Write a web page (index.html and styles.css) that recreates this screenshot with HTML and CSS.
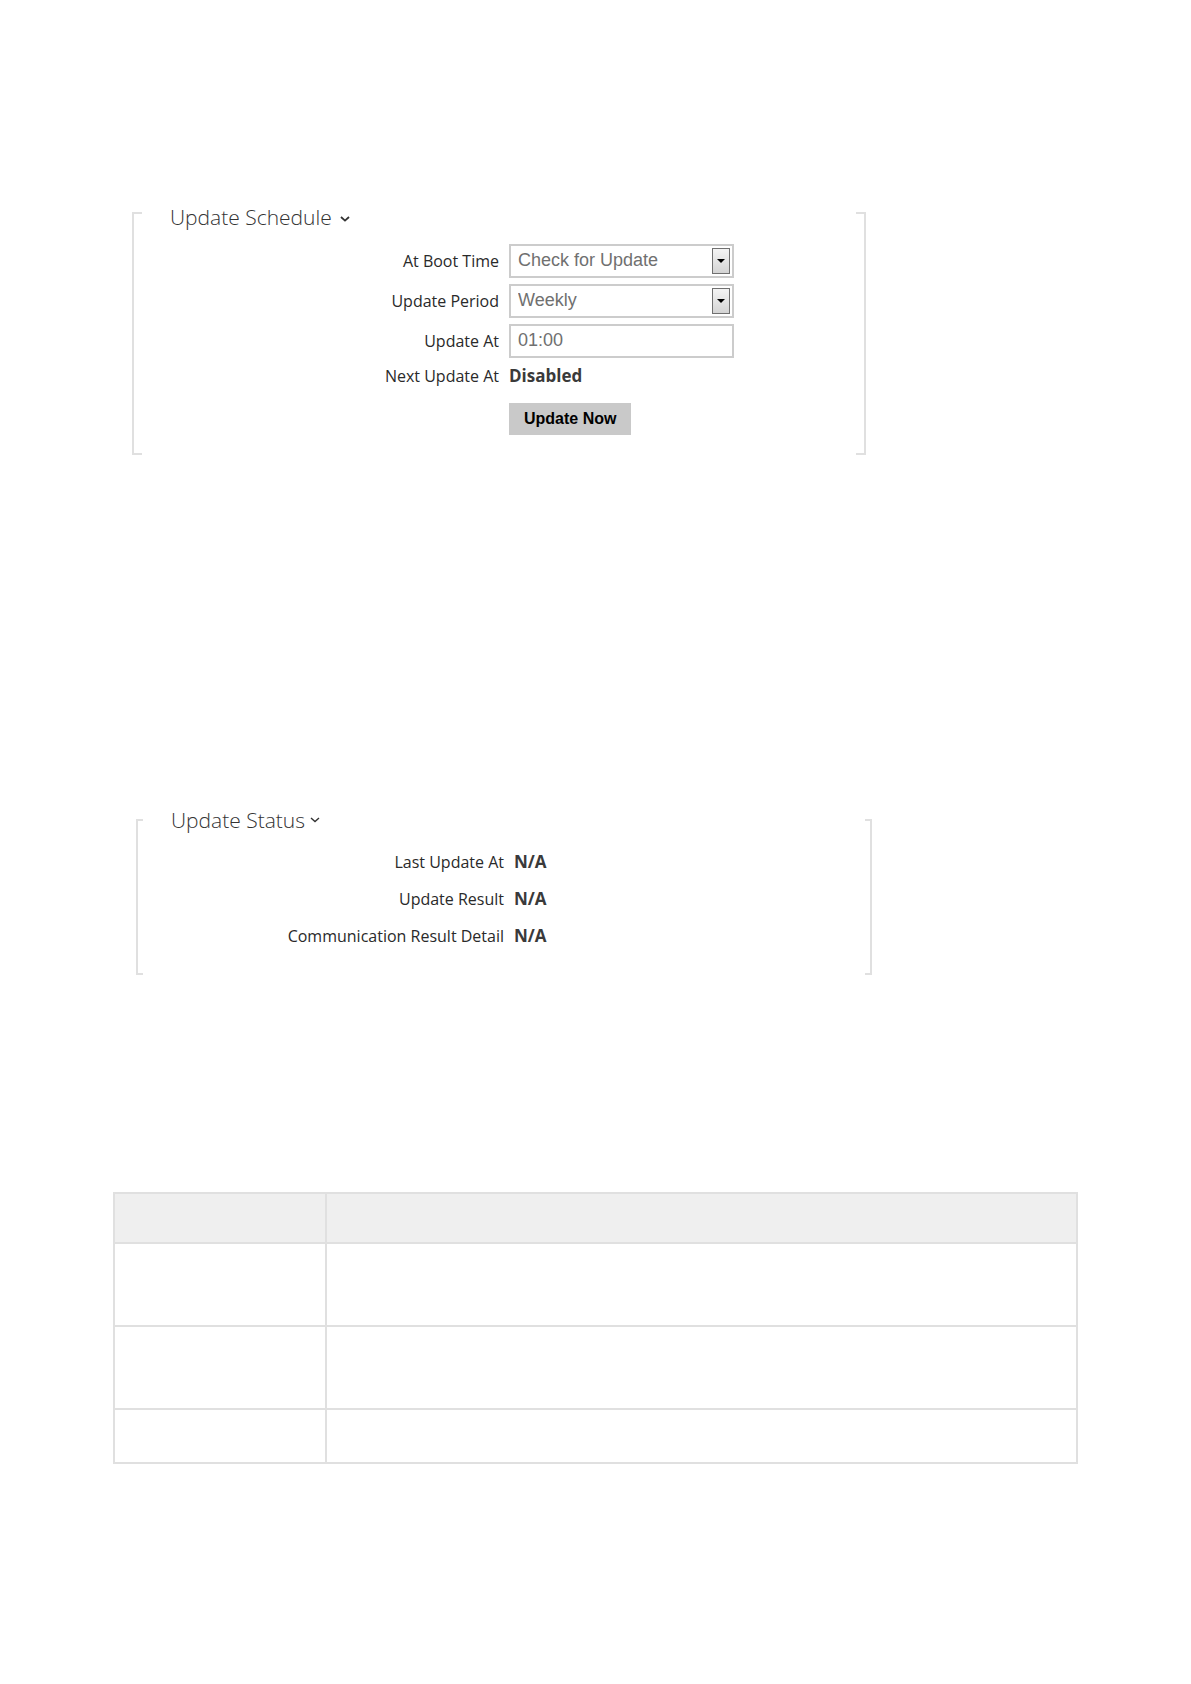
FILE: index.html
```html
<!DOCTYPE html>
<html lang="en">
<head>
<meta charset="utf-8">
<title>Update Settings</title>
<link rel="stylesheet" href="styles.css">
</head>
<body>
<main class="page">
  <section class="panel schedule">
    <div class="bracket left"></div>
    <div class="content">
      <h2 class="title">Update Schedule
        <svg class="chevron" width="10" height="6" viewBox="0 0 10 6" aria-hidden="true"><path d="M1 1l4 3.6L9 1" fill="none" stroke="currentColor" stroke-width="1.8"/></svg>
      </h2>
      <form class="fields">
        <label for="boot">At Boot Time</label>
        <div class="picker">
          <select id="boot" class="control"><option>Check for Update</option></select>
          <span class="arrow"><svg width="8" height="4" viewBox="0 0 8 4" aria-hidden="true"><path d="M0 0h8L4 4z"/></svg></span>
        </div>
        <label for="period">Update Period</label>
        <div class="picker">
          <select id="period" class="control"><option>Weekly</option></select>
          <span class="arrow"><svg width="8" height="4" viewBox="0 0 8 4" aria-hidden="true"><path d="M0 0h8L4 4z"/></svg></span>
        </div>
        <label for="time">Update At</label>
        <input id="time" class="control" type="text" value="01:00">
        <label for="next">Next Update At</label>
        <output id="next" class="value">Disabled</output>
        <button class="action" type="button">Update Now</button>
      </form>
    </div>
    <div class="bracket right"></div>
  </section>

  <section class="panel status">
    <div class="bracket left"></div>
    <div class="content">
      <h2 class="title">Update Status
        <svg class="chevron" width="10" height="6" viewBox="0 0 10 6" aria-hidden="true"><path d="M1 1l4 3.6L9 1" fill="none" stroke="currentColor" stroke-width="1.4"/></svg>
      </h2>
      <dl class="results">
        <dt>Last Update At</dt><dd class="value">N/A</dd>
        <dt>Update Result</dt><dd class="value">N/A</dd>
        <dt>Communication Result Detail</dt><dd class="value">N/A</dd>
      </dl>
    </div>
    <div class="bracket right"></div>
  </section>

  <table class="grid">
    <thead><tr><th class="key"></th><th></th></tr></thead>
    <tbody>
      <tr class="tall"><td></td><td></td></tr>
      <tr class="tall"><td></td><td></td></tr>
      <tr><td></td><td></td></tr>
    </tbody>
  </table>
</main>
</body>
</html>
```
FILE: styles.css
```css
* { box-sizing: border-box; }

body {
  margin: 0;
  background: #fff;
  color: #2a2a2a;
  font: 16px/24px "Open Sans", "Noto Sans", sans-serif;
}

.page { padding: 202px 113px 220px; }

.panel { display: flex; }
.schedule { margin: 0 212px 0 19px; }
.status { margin: 350px 206px 0 23px; }

.bracket {
  flex: none;
  width: 10px;
  margin-top: 10px;
  border: 2px solid #e0e0e0;
}
.status .bracket {
  width: 7px;
  margin-top: 14px;
}
.left { border-right: 0; }
.right { border-left: 0; }

.content { flex: 1; }

.title {
  display: flex;
  align-items: center;
  gap: 8px;
  margin: 0;
  padding-left: 28px;
  color: #333;
  font-size: 21px;
  font-weight: 300;
  line-height: 30px;
}
.chevron { margin-top: 4px; }
.status .title { gap: 5px; }
.status .chevron { margin-top: 0; }

.fields {
  display: grid;
  grid-template-columns: 50% 225px;
  gap: 6px 10px;
  align-items: center;
  padding: 12px 0 20px;
}
label, dt { text-align: right; }

.control {
  display: block;
  width: 100%;
  height: 34px;
  margin: 0;
  padding: 0 7px 2px;
  border: 2px solid #ccc;
  border-radius: 0;
  background: #fff;
  color: #707070;
  font: 18px/28px "Liberation Sans", Arial, sans-serif;
  appearance: none;
}
.picker { position: relative; }
.arrow {
  position: absolute;
  top: 4px;
  right: 4px;
  display: flex;
  align-items: center;
  justify-content: center;
  width: 18px;
  height: 26px;
  border: 1px solid #707070;
  background: linear-gradient(#f4f4f4, #d4d4d4);
  pointer-events: none;
}

.value {
  margin: 0;
  color: #3a3a3a;
  font-size: 17px;
  font-weight: 700;
}

.action {
  grid-column: 2;
  justify-self: start;
  height: 32px;
  margin-top: 9px;
  padding: 0 15px;
  border: 0;
  background: #c9c9c9;
  color: #000;
  font: 700 16px/32px "Liberation Sans", Arial, sans-serif;
}

.results {
  display: grid;
  grid-template-columns: 50% 1fr;
  gap: 13px 10px;
  margin: 0;
  padding: 15px 0 27px;
}

.grid {
  width: 100%;
  margin-top: 217px;
  border-collapse: collapse;
  table-layout: fixed;
}
.grid th, .grid td {
  height: 54px;
  padding: 0;
  border: 2px solid #e0e0e0;
}
.grid th {
  height: 50px;
  background: #efefef;
}
.grid .key { width: 22%; }
.grid .tall td { height: 83px; }
```
